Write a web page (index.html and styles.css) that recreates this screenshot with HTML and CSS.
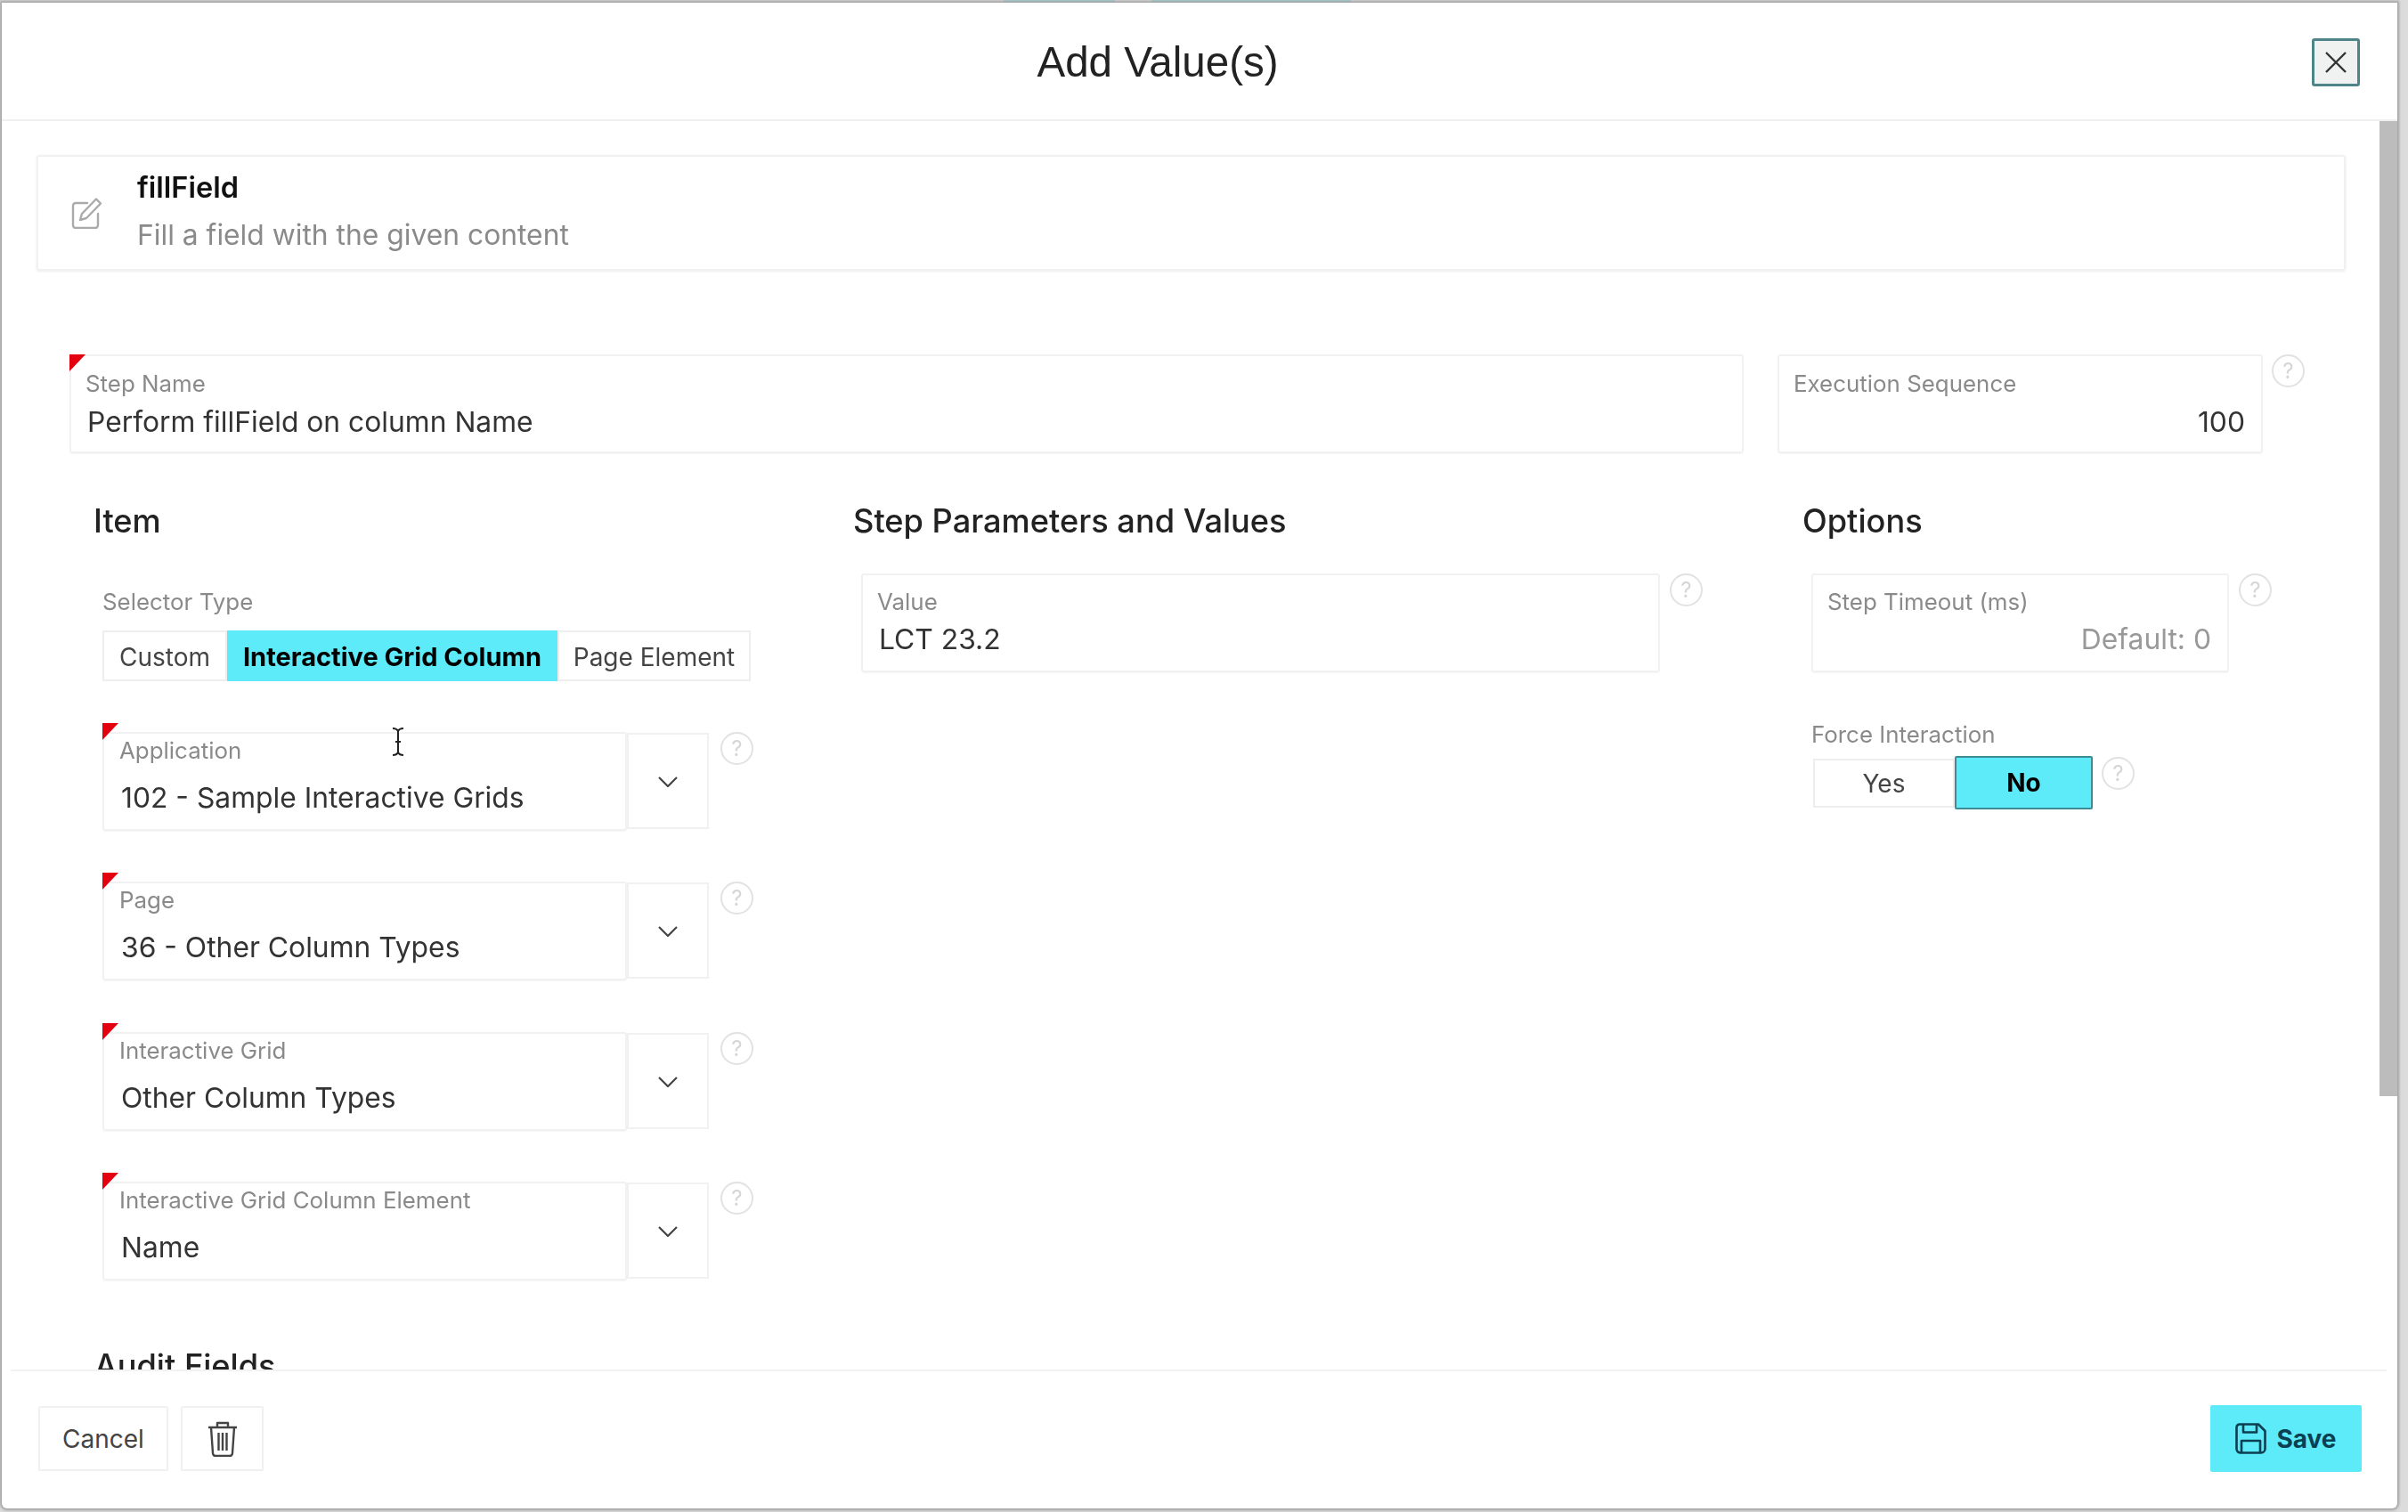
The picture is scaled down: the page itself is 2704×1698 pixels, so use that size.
FILE: index.html
```html
<!DOCTYPE html>
<html lang="en">
<head>
  <meta charset="UTF-8">
  <title>Add Value(s)</title>
  <link rel="stylesheet" href="styles.css">
</head>
<body>
  <div class="modal">
    <header class="modal-head">
      <h1>Add Value(s)</h1>
      <button class="close-btn" aria-label="Close">
        <svg width="26" height="26" viewBox="0 0 26 26"><path d="M2 2l22 22M24 2L2 24" fill="none" stroke="#333" stroke-width="2.4"/></svg>
      </button>
    </header>

    <div class="modal-body">
      <div class="scroll-thumb"></div>

      <div class="card">
        <svg class="card-icon" width="36" height="36" viewBox="0 0 36 36" fill="none" stroke="#aaa" stroke-width="2.4" stroke-linejoin="round" stroke-linecap="round">
          <path d="M18 7H5a3 3 0 0 0-3 3v22a3 3 0 0 0 3 3h22a3 3 0 0 0 3-3V19"/>
          <path d="M28 2.5l5 5L17 24l-7 2 2-7z"/>
        </svg>
        <div class="card-text">
          <div class="card-title">fillField</div>
          <div class="card-desc">Fill a field with the given content</div>
        </div>
      </div>

      <div class="top-row">
        <div class="field step-name required">
          <label>Step Name</label>
          <div class="val">Perform fillField on column Name</div>
        </div>
        <div class="field exec-seq">
          <label>Execution Sequence</label>
          <div class="val right">100</div>
        </div>
        <span class="help">?</span>
      </div>

      <div class="columns">
        <section class="col-item">
          <h2>Item</h2>
          <div class="plain-label selector-label">Selector Type</div>
          <div class="seg selector">
            <span class="seg-opt">Custom</span>
            <span class="seg-opt on">Interactive Grid Column</span>
            <span class="seg-opt">Page Element</span>
          </div>

          <div class="lov-list">
            <div class="lov">
              <div class="field lov-input required">
                <label>Application</label>
                <div class="val lov-val">102 - Sample Interactive Grids</div>
              </div>
              <span class="lov-btn"><svg width="22" height="12" viewBox="0 0 22 12"><path d="M1 1l10 10L21 1" fill="none" stroke="#444" stroke-width="2.2"/></svg></span>
              <span class="help">?</span>
            </div>
            <div class="lov">
              <div class="field lov-input required">
                <label>Page</label>
                <div class="val lov-val">36 - Other Column Types</div>
              </div>
              <span class="lov-btn"><svg width="22" height="12" viewBox="0 0 22 12"><path d="M1 1l10 10L21 1" fill="none" stroke="#444" stroke-width="2.2"/></svg></span>
              <span class="help">?</span>
            </div>
            <div class="lov">
              <div class="field lov-input required">
                <label>Interactive Grid</label>
                <div class="val lov-val">Other Column Types</div>
              </div>
              <span class="lov-btn"><svg width="22" height="12" viewBox="0 0 22 12"><path d="M1 1l10 10L21 1" fill="none" stroke="#444" stroke-width="2.2"/></svg></span>
              <span class="help">?</span>
            </div>
            <div class="lov">
              <div class="field lov-input required">
                <label>Interactive Grid Column Element</label>
                <div class="val lov-val">Name</div>
              </div>
              <span class="lov-btn"><svg width="22" height="12" viewBox="0 0 22 12"><path d="M1 1l10 10L21 1" fill="none" stroke="#444" stroke-width="2.2"/></svg></span>
              <span class="help">?</span>
            </div>
          </div>

          <h2 class="audit">Audit Fields</h2>
        </section>

        <section class="col-params">
          <h2>Step Parameters and Values</h2>
          <div class="with-help">
            <div class="field value-field">
              <label>Value</label>
              <div class="val">LCT 23.2</div>
            </div>
            <span class="help">?</span>
          </div>
        </section>

        <section class="col-options">
          <h2>Options</h2>
          <div class="with-help">
            <div class="field timeout-field">
              <label>Step Timeout (ms)</label>
              <div class="val right muted">Default: 0</div>
            </div>
            <span class="help">?</span>
          </div>
          <div class="plain-label force-label">Force Interaction</div>
          <div class="with-help force-row">
            <div class="seg force">
              <span class="seg-opt yes">Yes</span>
              <span class="seg-opt on no">No</span>
            </div>
            <span class="help">?</span>
          </div>
        </section>
      </div>

      <!-- mouse pointer caught in the shot -->
      <svg class="ibeam" width="14" height="32" viewBox="0 0 14 32" fill="none" stroke="#222" stroke-width="2">
        <path d="M1 1c3 0 5 1 6 3 1-2 3-3 6-3M7 4v24M1 31c3 0 5-1 6-3 1 2 3 3 6 3M4 16h6"/>
      </svg>
    </div>

    <footer class="modal-foot">
      <div class="foot-left">
        <button class="btn cancel">Cancel</button>
        <button class="btn trash" aria-label="Delete">
          <svg width="34" height="40" viewBox="0 0 34 40" fill="none" stroke="#444" stroke-width="2.4" stroke-linejoin="round">
            <path d="M1 7h32M11 7V2h12v5"/>
            <path d="M4 7l2 29a3 3 0 0 0 3 3h16a3 3 0 0 0 3-3l2-29"/>
            <path d="M12.500 13v20M17 13v20M21.500 13v20"/>
          </svg>
        </button>
      </div>
      <button class="btn save">
        <svg width="35" height="35" viewBox="0 0 35 35" fill="none" stroke="#0b3f52" stroke-width="2.600" stroke-linejoin="round">
          <path d="M5 1.500h21l7.500 7.500v20a4.500 4.500 0 0 1-4.500 4.500H5.500A4.500 4.500 0 0 1 1.500 29V5A3.500 3.500 0 0 1 5 1.500z"/>
          <path d="M9 1.500v9h15v-9M7 33.500V20h21v13.500"/>
        </svg>
        Save
      </button>
    </footer>
  </div>
</body>
</html>
```

FILE: styles.css
```css
* {
  box-sizing: border-box;
}
html, body {
  height: 100%;
}
body {
  margin: 0;
  background:
    linear-gradient(90deg, transparent 1127px, #a6d5da 1127px, #a6d5da 1252px, transparent 1252px, transparent 1293px, #a6d5da 1293px, #a6d5da 1517px, transparent 1517px) top / 100% 3px no-repeat,
    #dcdcdc;
  font-family: Inter, "Liberation Sans", sans-serif;
  color: #333;
  overflow: hidden;
}
.modal {
  width: 2690px;
  height: 1691px;
  margin: 3px 0 0 2px;
  background: #fff;
  box-shadow: 0 0 3px 2px #a0a0a0;
  border-radius: 0 0 6px 6px;
  display: flex;
  flex-direction: column;
  filter: blur(.5px);
}

/* header */
.modal-head {
  height: 133px;
  flex: none;
  padding: 2px 94px 0 0;
  display: flex;
  align-items: center;
  justify-content: center;
  border-bottom: 2px solid #f0f0f0;
  position: relative;
}
.modal-head h1 {
  margin: 0;
  font-family: "Liberation Sans", sans-serif;
  font-size: 47.500px;
  font-weight: 400;
  color: #222;
}
.close-btn {
  position: absolute;
  right: 42px;
  top: 40px;
  width: 54px;
  height: 54px;
  padding: 0;
  display: flex;
  align-items: center;
  justify-content: center;
  background: #f0f2f2;
  border: 3px solid #4f8488;
  border-radius: 3px;
}

/* body */
.modal-body {
  flex: 1;
  min-height: 0;
  overflow: hidden;
  position: relative;
  padding-top: 38px;
}
.scroll-thumb {
  position: absolute;
  right: 0;
  top: 0;
  width: 20px;
  height: 1095px;
  background: #bcbcbc;
}
.ibeam {
  position: absolute;
  left: 438px;
  top: 681px;
}
.card {
  width: 2593px;
  height: 130px;
  margin-left: 39px;
  padding-left: 37px;
  display: flex;
  align-items: center;
  gap: 38px;
  border: 2px solid #f1f1f1;
  border-radius: 3px;
  box-shadow: 0 1px 3px rgba(0,0,0,.08);
}
.card-text {
  padding-bottom: 3px;
}
.card-title {
  font-size: 32.500px;
  font-weight: 600;
  color: #111;
  line-height: 40px;
}
.card-desc {
  font-size: 31.800px;
  color: #8a8a8a;
  line-height: 40px;
  margin-top: 13px;
}

/* fields */
.field {
  position: relative;
  height: 111px;
  padding: 15px 18px 0 16px;
  border: 2px solid #f1f1f1;
  border-radius: 3px;
  box-shadow: 0 1px 1px rgba(0,0,0,.04);
}
.field label {
  display: block;
  font-size: 25.900px;
  line-height: 32px;
  color: #8a8a8a;
}
.val {
  font-size: 31.800px;
  line-height: 40px;
  margin: 7px 0 0 2px;
  color: #333;
}
.right {
  text-align: right;
}
.muted {
  color: #999;
}
.required::before {
  content: "";
  position: absolute;
  left: -2px;
  top: -2px;
  border-style: solid;
  border-width: 19px 18px 0 0;
  border-color: #e3000f transparent transparent transparent;
}
.help {
  flex: none;
  width: 37px;
  height: 37px;
  border: 2px solid #e2e2e2;
  border-radius: 50%;
  color: #d6d6d6;
  font-size: 24px;
  line-height: 33px;
  text-align: center;
}

.top-row {
  margin: 94px 0 0 76px;
  display: flex;
  align-items: flex-start;
}
.step-name {
  width: 1880px;
  margin-right: 38px;
}
.exec-seq {
  width: 545px;
  margin-right: 10px;
}

/* three columns */
.columns {
  margin: 54px 0 0 103px;
  display: grid;
  grid-template-columns: 853px 1066px 1fr;
}
h2 {
  margin: 0;
  font-size: 36.200px;
  line-height: 44px;
  font-weight: 500;
  color: #222;
}
.plain-label {
  font-size: 25.900px;
  line-height: 32px;
  color: #8a8a8a;
}
.selector-label {
  margin: 53px 0 16px 10px;
}
.seg {
  display: flex;
  font-size: 28px;
  color: #444;
}
.seg-opt {
  display: flex;
  align-items: center;
  justify-content: center;
  border: 2px solid #eee;
}
.seg-opt.on {
  background: #5eebf9;
  border-color: #5eebf9;
  color: #000;
  font-weight: 700;
}
.selector {
  margin-left: 10px;
  width: 728px;
  height: 57px;
}
.selector .seg-opt {
  padding-top: 2px;
}
.selector .seg-opt:nth-child(1) {
  width: 140px;
}
.selector .seg-opt:nth-child(2) {
  width: 371px;
  font-size: 29px;
}
.selector .seg-opt:nth-child(3) {
  width: 217px;
}
.lov-list {
  margin: 57px 0 0 10px;
  display: flex;
  flex-direction: column;
  gap: 57.400px;
}
.lov {
  display: flex;
  align-items: flex-start;
}
.lov-input {
  width: 589px;
  padding: 3px 18px 0 17px;
}
.lov-input.required::before {
  top: -12px;
}
.lov-val {
  margin-top: 17px;
}
.lov-btn {
  width: 92px;
  height: 108px;
  margin-top: 1px;
  padding-top: 2px;
  display: flex;
  align-items: center;
  justify-content: center;
  border: 2px solid #f1f1f1;
}
.lov .help {
  margin-left: 13px;
}
.audit {
  margin: 74px 0 0 1px;
}
.with-help {
  display: flex;
  align-items: flex-start;
}
.col-params .with-help {
  margin: 37px 0 0 9px;
}
.col-options .with-help {
  margin: 37px 0 0 10px;
}
.col-params .field, .col-options .field {
  padding-top: 14px;
}
.col-params .val, .col-options .val {
  margin-top: 6px;
}
.value-field {
  width: 897px;
  margin-right: 11px;
}
.timeout-field {
  width: 469px;
  margin-right: 11px;
}
.force-label {
  margin: 54px 0 0 10px;
}
.col-options .force-row {
  margin: 8px 0 0 12px;
}
.force .yes {
  width: 159px;
  height: 55px;
  margin-top: 3px;
}
.force .no {
  width: 155px;
  height: 60px;
  border: 2px solid #3c8c96;
  border-radius: 2px;
}
.force + .help {
  margin: 1px 0 0 10px;
}

/* footer */
.modal-foot {
  height: 156px;
  flex: none;
  margin: 0 12px 0 10px;
  padding: 39px 28px 0 31px;
  display: flex;
  justify-content: space-between;
  align-items: flex-start;
  border-top: 2px solid #f2f2f2;
}
.foot-left {
  display: flex;
  gap: 14px;
}
.btn {
  height: 73px;
  font-family: inherit;
  font-size: 28px;
  color: #444;
  background: #fff;
  border: 2px solid #f0f0f0;
  border-radius: 2px;
  display: flex;
  align-items: center;
  justify-content: center;
  padding: 0;
}
.cancel {
  width: 146px;
}
.trash {
  width: 93px;
}
.save {
  width: 170px;
  height: 75px;
  margin-top: -1px;
  gap: 11px;
  background: #5eebf9;
  border: 0;
  color: #0b3f52;
  font-weight: 700;
}
```
